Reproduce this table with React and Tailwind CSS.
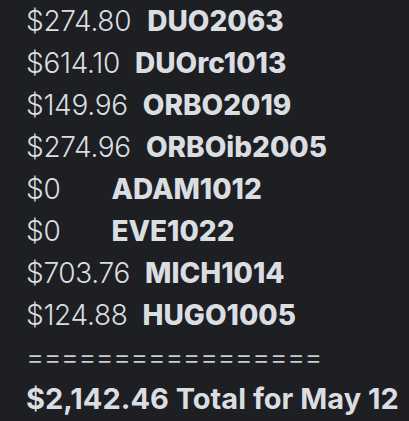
export default function App() {
  const rows = [
    ["$274.80", "DUO2063", "ml-[16px]"],
    ["$614.10", "DUOrc1013", "ml-[15px]"],
    ["$149.96", "ORBO2019", "ml-[15px]"],
    ["$274.96", "ORBOib2005", "ml-[15px]"],
    ["$0", "ADAM1012", "ml-[51px]"],
    ["$0", "EVE1022", "ml-[51px]"],
    ["$703.76", "MICH1014", "ml-[15px]"],
    ["$124.88", "HUGO1005", "ml-[15px]"],
  ];
  return (
    <div className="w-[409px] h-[421px] bg-[#1e1f23] text-[#dbdee1] pl-[26px] pt-0 overflow-hidden font-['Inter',sans-serif] text-[28px] leading-[42px]">
      {rows.map(([a, c, m]) => (
        <div key={c} className="whitespace-nowrap">
          <span className="font-light tracking-[-0.3px]">{a}</span>
          <span className={`font-extrabold ${m}`}>{c}</span>
        </div>
      ))}
      <div className="font-light whitespace-nowrap tracking-[-0.9px] text-[#c9ccd0]">=================</div>
      <div className="font-bold whitespace-nowrap text-[29px]">$2,142.46 Total for May 12</div>
    </div>
  );
}
